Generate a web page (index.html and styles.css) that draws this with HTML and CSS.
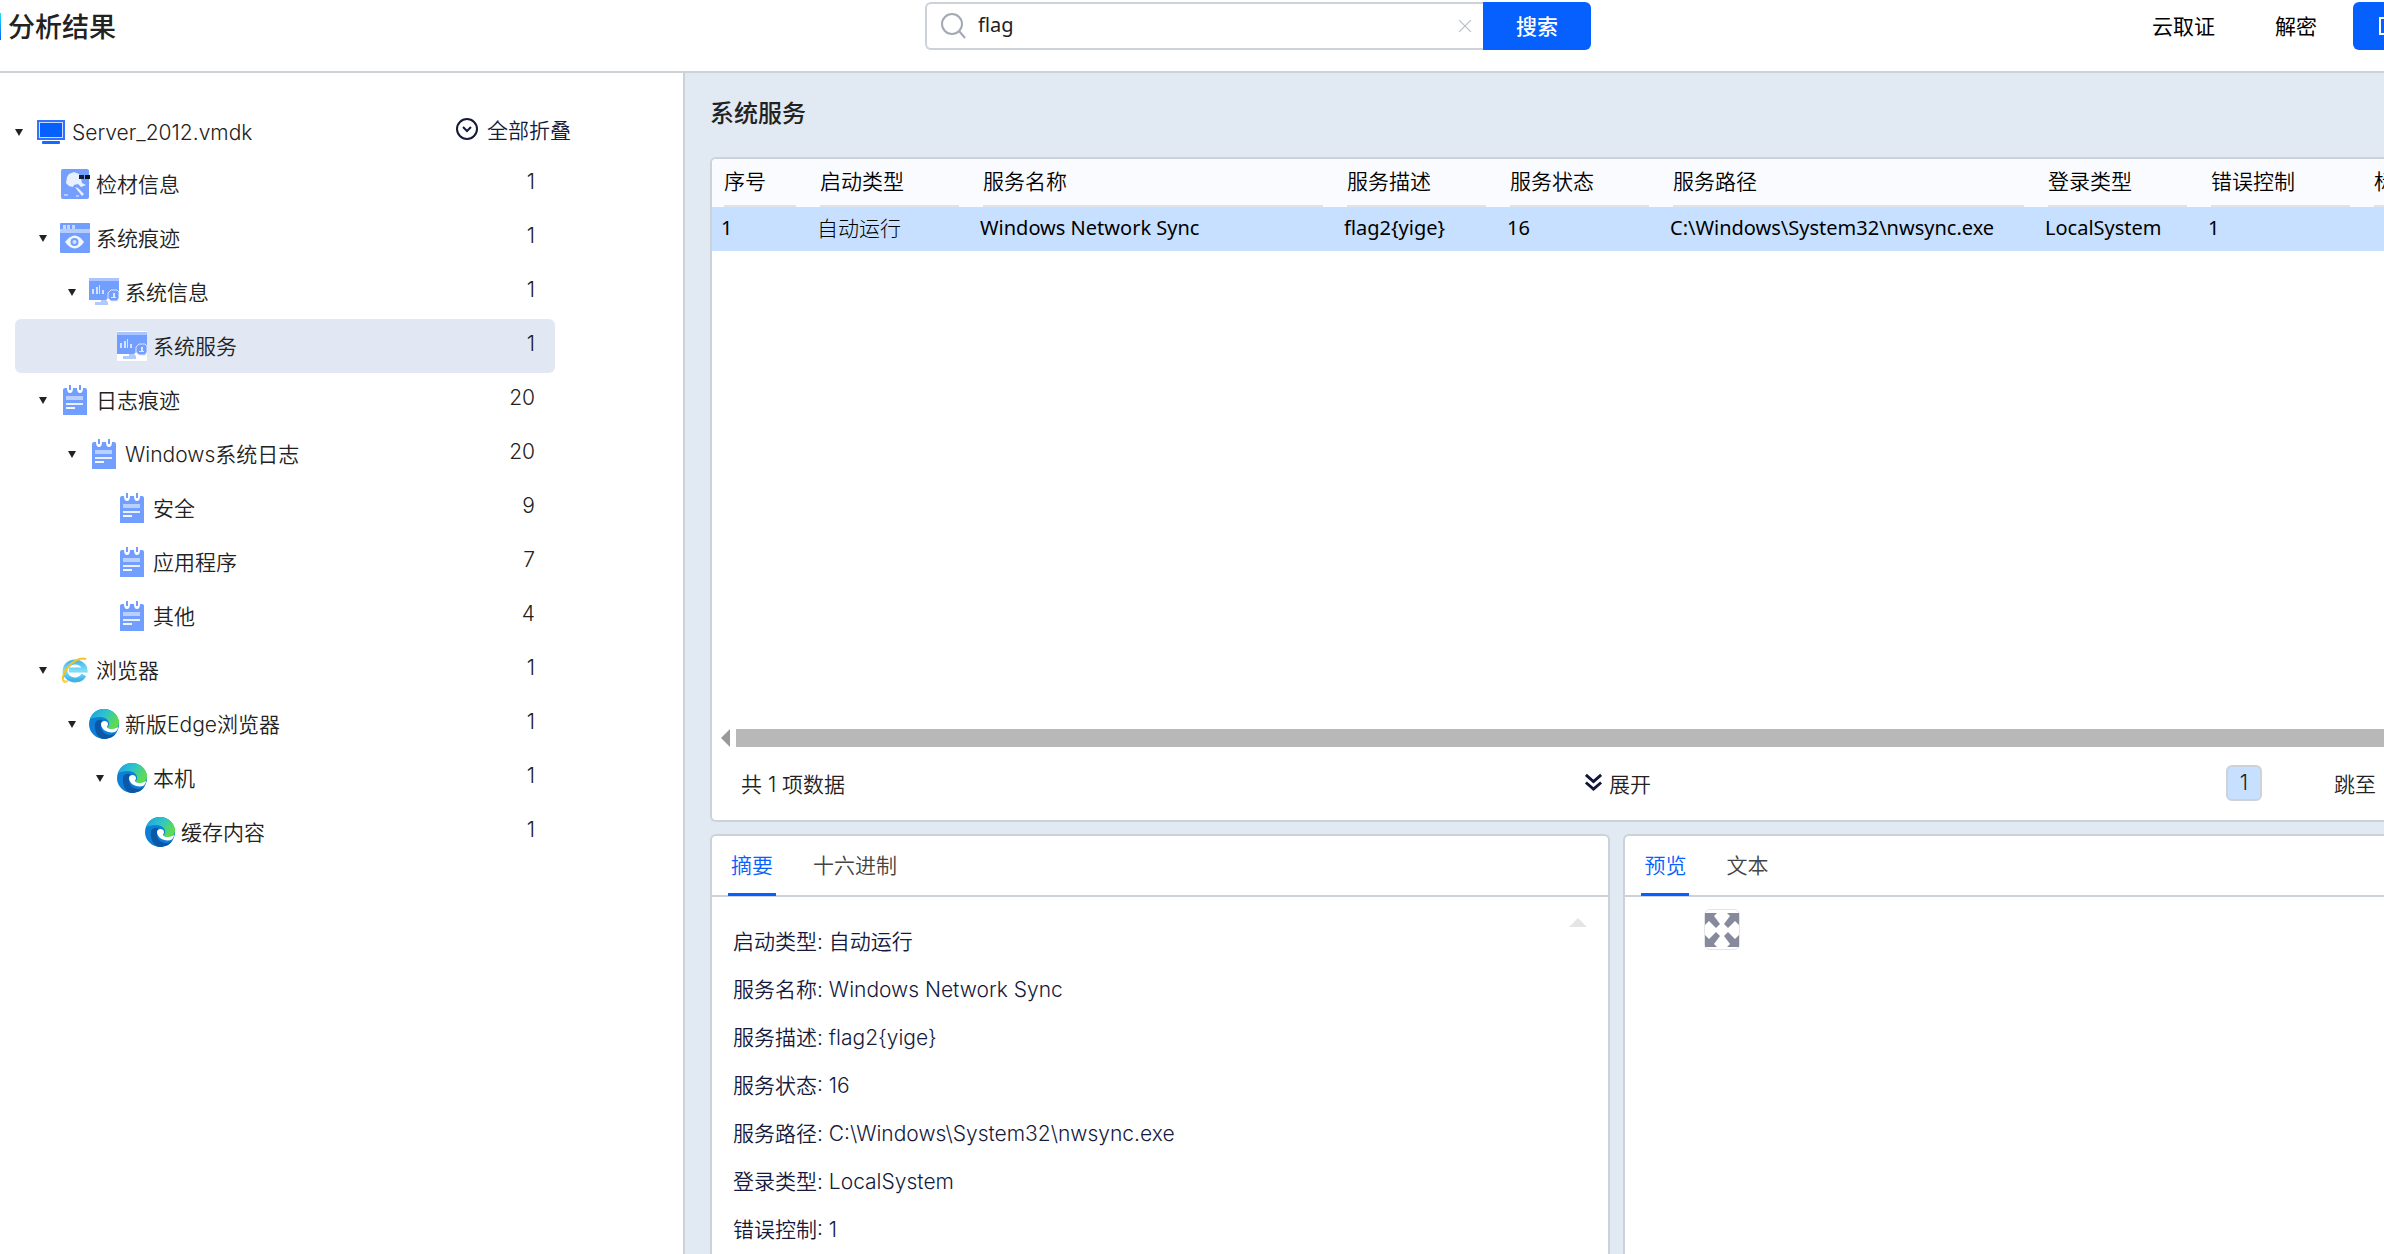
FILE: index.html
```html
<!DOCTYPE html>
<html lang="zh-CN">
<head>
    <meta charset="UTF-8">
    <meta name="viewport" content="width=device-width, initial-scale=1.0">
    <title>分析结果</title>
    <link rel="stylesheet" href="styles.css">
</head>
<body>

    <!-- shared icons -->
    <svg class="icon-defs" aria-hidden="true">
        <defs>
            <linearGradient id="edge-top" x1="0" y1="0" x2="1" y2="0.5">
                <stop offset="0" stop-color="#1b9de0"/>
                <stop offset="0.5" stop-color="#2cc3cf"/>
                <stop offset="1" stop-color="#5fdc4c"/>
            </linearGradient>
            <linearGradient id="ie-ring" x1="0" y1="0" x2="0" y2="1">
                <stop offset="0" stop-color="#4cb8ec"/>
                <stop offset="0.5" stop-color="#7fe0fb"/>
                <stop offset="1" stop-color="#3fb2ea"/>
            </linearGradient>
        </defs>
        <symbol id="icon-screen" viewBox="0 0 30 30">
            <rect x="1" y="3" width="28" height="20" fill="#2f74ff"/>
            <rect x="3" y="5" width="24" height="16" fill="#c9dcff"/>
            <rect x="4" y="6" width="22" height="14" fill="#0560fd"/>
            <rect x="6" y="24" width="18" height="3" rx="1" fill="#1569ff"/>
        </symbol>
        <symbol id="icon-disk" viewBox="0 0 30 30">
            <rect x="1" width="28" height="30" rx="2" fill="#749fff"/>
            <path d="M9 5l5-2 5 2 2 4 1 5 4 2-5 2-3-3-4 1-1 2-4-1-3-3 1-6z" fill="#e9f0ff"/>
            <path d="M15 18l3 1 6 6-2 2-4-5z" fill="#e9f0ff"/>
            <rect x="19" y="6" width="5" height="4" fill="#15223f"/>
            <rect x="25" y="6" width="5" height="4" fill="#101522"/>
            <path d="M4 25h4v2H4zM16 26h3v2h-3z" fill="#b4ccff"/>
        </symbol>
        <symbol id="icon-eye" viewBox="0 0 30 30">
            <rect width="30" height="30" rx="1" fill="#729fff"/>
            <rect y="6" width="30" height="4" fill="#b5ccff"/>
            <path d="M3 2h3v4H3zM7 2h3v4H7zM12 2h3v4h-3z" fill="#c3d6ff"/>
            <path d="M5 19q10-13 19 0q-9 13-19 0z" fill="#f1f6ff"/>
            <circle cx="14.500" cy="19" r="4" fill="#729fff"/>
            <circle cx="14.500" cy="19" r="2" fill="#d3e1ff"/>
        </symbol>
        <symbol id="icon-monitor" viewBox="0 0 30 30">
            <rect y="1" width="30" height="3" fill="#a9c4ff"/>
            <path d="M0 4h30v14h-5l-5 2-3 3H0z" fill="#729fff"/>
            <path d="M3 12h2v5H3zM7 10h2v7H7zM10 8h1v9h-1zM13 13h2v4h-2z" fill="#d6e3ff"/>
            <path d="M12 23h5l2 2v3H6v-3h6z" fill="#b0c9ff"/>
            <path d="M22 13h6l2 2v6l-2 3h-6l-3-3v-5z" fill="#729fff" stroke="#d9e5ff"/>
            <path d="M24 16h2v5h-2zM22 20h5v1h-5z" fill="#dce7ff"/>
        </symbol>
        <symbol id="icon-log" viewBox="0 0 30 30">
            <path d="M3 5q0-2 2-2h2q0 5 3 5t3-5h4q0 5 3 5t3-5h2q2 0 2 2v25H3z" fill="#729fff"/>
            <path d="M9 0h2v5H9zM19 0h2v5h-2z" fill="#729fff"/>
            <rect x="6" y="11" width="17" height="4" fill="#b9d0ff"/>
            <rect x="6" y="18" width="17" height="2" fill="#e8f0ff"/>
            <rect x="6" y="22" width="9" height="2" fill="#f3f7ff"/>
        </symbol>
        <symbol id="icon-ie" viewBox="0 0 30 30">
            <path d="M24 20a10 9 0 1 1 1-5H9" fill="none" stroke="url(#ie-ring)" stroke-width="5"/>
            <path d="M5 27C-3 23 13 0 26 4" fill="none" stroke="#f6c321" stroke-width="2"/>
            <path d="M3 24q0 4 5 2" fill="none" stroke="#f8cf4a" stroke-width="2"/>
        </symbol>
        <symbol id="icon-edge" viewBox="0 0 30 30">
            <circle cx="15" cy="15" r="15" fill="#0f7fd6"/>
            <path d="M1 10C4 2 10 0 15 0c9 0 15 7 15 13 0 6-5 8-9 7-3-1-2-2-1-4 1-4-3-8-9-8-4 0-8 1-10 2z" fill="url(#edge-top)"/>
            <path d="M6 14c2-4 6-4 8-2-3 3-3 10 3 13 4 2 8 1 11-2-3 5-8 7-13 7C9 30 5 23 6 14z" fill="#0c58a8"/>
            <path d="M12 15c0-4 7-4 7 0 0 2-2 3 0 4 2 2 7 1 10-1 0 3-2 4-3 5-4 1-8 0-11-2-2-2-3-4-3-6z" fill="#fff"/>
        </symbol>
    </svg>

    <header class="topbar">
        <div class="brand">
            <span class="brand-mark"></span>
            <h1>分析结果</h1>
        </div>
        <form class="search">
            <label class="search-field">
                <svg class="search-icon" viewBox="0 0 26 26" aria-hidden="true">
                    <circle cx="12" cy="11" r="10"/>
                    <path d="M19 18l6 7"/>
                </svg>
                <input type="text" name="keyword" value="flag" aria-label="搜索">
                <button type="button" class="clear-btn" aria-label="清除">
                    <svg viewBox="0 0 12 12"><path d="M1 1l10 10M11 1L1 11"/></svg>
                </button>
            </label>
            <button type="submit" class="search-btn">搜索</button>
        </form>
        <nav class="top-nav">
            <a href="#">云取证</a>
            <a href="#">解密</a>
            <button type="button" class="export-btn" aria-label="导出">
                <svg viewBox="0 0 18 18"><rect x="1" y="1" width="16" height="16"/></svg>
            </button>
        </nav>
    </header>

    <div class="page">
        <aside class="sidebar">
            <div class="tree-root">
                <div class="tree-row">
                    <span class="arrow"></span>
                    <svg class="tree-icon"><use href="#icon-screen"/></svg>
                    <span class="label">Server_2012.vmdk</span>
                </div>
                <button type="button" class="collapse-btn">
                    <svg viewBox="0 0 22 22"><circle cx="11" cy="11" r="10"/><path d="M7 9l4 4 4-4"/></svg>
                    全部折叠
                </button>
            </div>
            <ul class="tree">
                <li class="tree-row level-1"><span class="arrow leaf"></span><svg class="tree-icon"><use href="#icon-disk"/></svg><span class="label">检材信息</span><span class="count">1</span></li>
                <li class="tree-row level-1"><span class="arrow"></span><svg class="tree-icon"><use href="#icon-eye"/></svg><span class="label">系统痕迹</span><span class="count">1</span></li>
                <li class="tree-row level-2"><span class="arrow"></span><svg class="tree-icon"><use href="#icon-monitor"/></svg><span class="label">系统信息</span><span class="count">1</span></li>
                <li class="tree-row level-3 selected"><span class="arrow leaf"></span><svg class="tree-icon"><use href="#icon-monitor"/></svg><span class="label">系统服务</span><span class="count">1</span></li>
                <li class="tree-row level-1"><span class="arrow"></span><svg class="tree-icon"><use href="#icon-log"/></svg><span class="label">日志痕迹</span><span class="count">20</span></li>
                <li class="tree-row level-2"><span class="arrow"></span><svg class="tree-icon"><use href="#icon-log"/></svg><span class="label">Windows系统日志</span><span class="count">20</span></li>
                <li class="tree-row level-3"><span class="arrow leaf"></span><svg class="tree-icon"><use href="#icon-log"/></svg><span class="label">安全</span><span class="count">9</span></li>
                <li class="tree-row level-3"><span class="arrow leaf"></span><svg class="tree-icon"><use href="#icon-log"/></svg><span class="label">应用程序</span><span class="count">7</span></li>
                <li class="tree-row level-3"><span class="arrow leaf"></span><svg class="tree-icon"><use href="#icon-log"/></svg><span class="label">其他</span><span class="count">4</span></li>
                <li class="tree-row level-1"><span class="arrow"></span><svg class="tree-icon"><use href="#icon-ie"/></svg><span class="label">浏览器</span><span class="count">1</span></li>
                <li class="tree-row level-2"><span class="arrow"></span><svg class="tree-icon"><use href="#icon-edge"/></svg><span class="label">新版Edge浏览器</span><span class="count">1</span></li>
                <li class="tree-row level-3"><span class="arrow"></span><svg class="tree-icon"><use href="#icon-edge"/></svg><span class="label">本机</span><span class="count">1</span></li>
                <li class="tree-row level-4"><span class="arrow leaf"></span><svg class="tree-icon"><use href="#icon-edge"/></svg><span class="label">缓存内容</span><span class="count">1</span></li>
            </ul>
        </aside>

        <main class="content">
            <h2>系统服务</h2>

            <section class="panel result-panel">
                <div class="table-wrap">
                    <table>
                        <colgroup>
                            <col class="col-index">
                            <col class="col-normal">
                            <col class="col-name">
                            <col class="col-normal">
                            <col class="col-normal">
                            <col class="col-path">
                            <col class="col-normal">
                            <col class="col-normal">
                            <col class="col-normal">
                        </colgroup>
                        <thead>
                            <tr>
                                <th>序号</th>
                                <th>启动类型</th>
                                <th>服务名称</th>
                                <th>服务描述</th>
                                <th>服务状态</th>
                                <th>服务路径</th>
                                <th>登录类型</th>
                                <th>错误控制</th>
                                <th>标签</th>
                            </tr>
                        </thead>
                        <tbody>
                            <tr>
                                <td>1</td>
                                <td class="cjk">自动运行</td>
                                <td>Windows Network Sync</td>
                                <td>flag2{yige}</td>
                                <td>16</td>
                                <td>C:\Windows\System32\nwsync.exe</td>
                                <td>LocalSystem</td>
                                <td>1</td>
                                <td></td>
                            </tr>
                        </tbody>
                    </table>
                </div>
                <div class="h-scroll">
                    <span class="scroll-left"></span>
                    <span class="scroll-thumb"></span>
                </div>
                <div class="table-footer">
                    <span class="total">共 1 项数据</span>
                    <button type="button" class="expand-btn">
                        <svg viewBox="0 0 20 20"><path d="M2 2l8 7 8-7M2 10l8 7 8-7"/></svg>
                        展开
                    </button>
                    <div class="pager">
                        <button type="button" class="page-btn">1</button>
                        <span>跳至</span>
                    </div>
                </div>
            </section>

            <div class="bottom">
                <section class="panel summary-panel">
                    <div class="tabs">
                        <button type="button" class="tab active">摘要</button>
                        <button type="button" class="tab">十六进制</button>
                    </div>
                    <div class="summary">
                        <ul>
                            <li>启动类型: 自动运行</li>
                            <li>服务名称: Windows Network Sync</li>
                            <li>服务描述: flag2{yige}</li>
                            <li>服务状态: 16</li>
                            <li>服务路径: C:\Windows\System32\nwsync.exe</li>
                            <li>登录类型: LocalSystem</li>
                            <li>错误控制: 1</li>
                        </ul>
                        <span class="scroll-up"></span>
                    </div>
                </section>
                <section class="panel preview-panel">
                    <div class="tabs">
                        <button type="button" class="tab active">预览</button>
                        <button type="button" class="tab">文本</button>
                    </div>
                    <button type="button" class="full-btn" aria-label="全屏">
                        <svg viewBox="0 0 34 34">
                            <path d="M0 0h12l-3 3 6 8-4 4-7-7-4 4z"/>
                            <path d="M34 0v12l-4-4-7 7-4-4 6-8-3-3z"/>
                            <path d="M0 34V22l4 4 7-7 4 4-6 8 3 3z"/>
                            <path d="M34 34H22l3-3-6-8 4-4 7 7 4-4z"/>
                        </svg>
                    </button>
                </section>
            </div>
        </main>
    </div>

</body>
</html>
```
FILE: styles.css
```css
* {
    box-sizing: border-box;
}
body {
    margin: 0;
    height: 100vh;
    display: flex;
    flex-direction: column;
    overflow: hidden;
    background-color: #fff;
    color: #222;
    font-family: "Inter", "Noto Sans CJK SC", sans-serif;
    font-size: 21px;
    font-weight: 350;
}
h1, h2, ul {
    margin: 0;
    padding: 0;
}
ul {
    list-style: none;
}
button, input {
    font: inherit;
    color: inherit;
    border: none;
    background: none;
    padding: 0;
    margin: 0;
}
button {
    cursor: pointer;
}
a {
    color: #000;
    text-decoration: none;
}
.icon-defs {
    position: absolute;
    width: 0;
    height: 0;
}

/* top bar */
.topbar {
    display: flex;
    flex: none;
    height: 73px;
    padding-top: 2px;
    align-items: flex-start;
    border-bottom: 2px solid #cdd2d7;
}
.brand {
    display: flex;
    align-items: center;
    width: 925px;
    height: 48px;
    gap: 7px;
}
.brand-mark {
    width: 1px;
    height: 27px;
    background: linear-gradient(#19e3f5, #0560fd);
}
.brand h1 {
    padding-bottom: 2px;
    font-size: 27px;
    font-weight: 500;
}
.search {
    display: flex;
    width: 666px;
    height: 48px;
}
.search-field {
    display: flex;
    flex: 1;
    align-items: center;
    padding: 0 11px 0 13px;
    border: 2px solid #cdd2d9;
    border-right: none;
    border-radius: 6px 0 0 6px;
}
.search-icon {
    width: 26px;
    height: 26px;
    fill: none;
    stroke: #a3a9b4;
    stroke-width: 2;
}
.search-field input {
    flex: 1;
    min-width: 0;
    height: 40px;
    padding: 0 12px 4px;
    outline: none;
    font-family: "Noto Sans", sans-serif;
    font-size: 20px;
    font-weight: 400;
}
.clear-btn svg {
    display: block;
    width: 14px;
    height: 14px;
    stroke: #b9bdc5;
    stroke-width: 1;
}
.search-btn {
    width: 108px;
    padding-bottom: 2px;
    background-color: #0560fd;
    border-radius: 0 6px 6px 0;
    color: #fff;
    font-weight: 500;
}
.top-nav {
    display: flex;
    align-items: center;
    margin-left: auto;
    height: 48px;
}
.top-nav a {
    margin-right: 60px;
    padding-bottom: 2px;
    font-weight: 400;
}
.top-nav a + a {
    margin-right: 36px;
}
.export-btn {
    width: 31px;
    height: 48px;
    padding-left: 26px;
    overflow: hidden;
    background-color: #0560fd;
    border-radius: 6px 0 0 6px;
}
.export-btn svg {
    display: block;
    width: 18px;
    height: 18px;
    fill: none;
    stroke: #fff;
    stroke-width: 2;
}

/* page */
.page {
    display: flex;
    flex: 1;
    min-height: 0;
}
.sidebar {
    flex: none;
    width: 685px;
    padding: 30px 112px 0 15px;
    border-right: 2px solid #cdd2d9;
}
.tree-root {
    display: flex;
    justify-content: space-between;
    align-items: center;
}
.tree-root .tree-row {
    padding-top: 4px;
}
.tree {
    padding-right: 16px;
}
.tree-row {
    display: flex;
    align-items: center;
    height: 54px;
    padding-right: 20px;
    border-radius: 6px;
}
.level-1 {
    padding-left: 24px;
}
.level-2 {
    padding-left: 53px;
}
.level-3 {
    padding-left: 81px;
}
.level-4 {
    padding-left: 109px;
}
.selected {
    background-color: #e1e8f4;
}
.selected .tree-icon {
    background-color: #fff;
}
.arrow {
    margin-right: 13px;
    border-top: 7px solid #222;
    border-left: 4px solid transparent;
    border-right: 4px solid transparent;
}
.leaf {
    visibility: hidden;
}
.tree-icon {
    width: 30px;
    height: 30px;
    margin-right: 6px;
}
.tree .label {
    padding-bottom: 2px;
}
.count {
    margin-left: auto;
    padding-bottom: 6px;
}
.collapse-btn {
    display: flex;
    align-items: center;
    gap: 9px;
    padding-bottom: 2px;
    color: #151a3c;
}
.collapse-btn svg {
    width: 22px;
    height: 22px;
    fill: none;
    stroke: #151a3c;
    stroke-width: 2;
}

/* right side */
.content {
    display: flex;
    flex: 1;
    flex-direction: column;
    min-width: 0;
    padding-left: 25px;
    background-color: #e1e9f3;
}
.content h2 {
    height: 84px;
    font-size: 24px;
    font-weight: 500;
    line-height: 82px;
}
.panel {
    overflow: hidden;
    background-color: #fff;
    border: 2px solid #cdd2d9;
    border-radius: 6px;
}
.result-panel {
    display: flex;
    flex: 63;
    flex-direction: column;
    min-height: 0;
    border-right: none;
    border-radius: 6px 0 0 6px;
}
.table-wrap {
    flex: 1;
    min-height: 0;
    overflow: hidden;
}
table {
    width: 1812px;
    table-layout: fixed;
    border-collapse: collapse;
    color: #000;
}
.col-index {
    width: 96px;
}
.col-normal {
    width: 163px;
}
.col-name {
    width: 364px;
}
.col-path {
    width: 375px;
}
th {
    height: 48px;
    padding: 0 12px 6px;
    background: linear-gradient(#e1e1e6, #e1e1e6) no-repeat 12px bottom / calc(100% - 24px) 2px;
    background-color: #fafbff;
    font-weight: 350;
    text-align: left;
    white-space: nowrap;
}
td {
    height: 44px;
    padding: 0 9px 4px;
    background-color: #c7e0ff;
    font-family: "Noto Sans", "Noto Sans CJK SC", sans-serif;
    font-size: 20px;
    font-weight: 400;
    white-space: nowrap;
}
td.cjk {
    font-size: 21px;
    font-weight: 300;
}
.h-scroll {
    display: flex;
    align-items: center;
    gap: 6px;
    height: 18px;
    padding-left: 9px;
}
.scroll-left {
    border-right: 9px solid #999;
    border-top: 9px solid transparent;
    border-bottom: 9px solid transparent;
}
.scroll-thumb {
    flex: 1;
    height: 18px;
    background-color: #b8b8b8;
}
.table-footer {
    display: flex;
    align-items: center;
    height: 73px;
    padding: 0 8px 2px 29px;
}
.total {
    width: 843px;
}
.expand-btn {
    display: flex;
    align-items: center;
    gap: 6px;
}
.expand-btn svg {
    width: 19px;
    height: 19px;
    fill: none;
    stroke: #10153a;
    stroke-width: 3;
}
.pager {
    display: flex;
    align-items: center;
    gap: 72px;
    margin-left: auto;
}
.page-btn {
    width: 36px;
    height: 36px;
    background-color: #c7e0ff;
    border: 2px solid #cdd2d9;
    border-radius: 6px;
}

/* summary and preview */
.bottom {
    display: flex;
    flex: 40;
    gap: 13px;
    min-height: 0;
    margin-top: 12px;
}
.summary-panel {
    flex: 13;
    border-bottom: none;
    border-radius: 6px 6px 0 0;
}
.preview-panel {
    flex: 11;
    border-bottom: none;
    border-right: none;
    border-radius: 6px 0 0 0;
}
.tabs {
    display: flex;
    gap: 34px;
    height: 61px;
    padding-left: 16px;
    border-bottom: 2px solid #cdd2d9;
}
.tab {
    height: 60px;
    padding: 0 3px 2px;
    border-bottom: 3px solid transparent;
    color: #444;
}
.tab.active {
    border-color: #0560fd;
    color: #0560fd;
}
.summary {
    display: flex;
    justify-content: space-between;
    padding: 21px 21px 0;
    color: #151a3c;
}
.summary li {
    line-height: 48px;
}
.scroll-up {
    align-self: flex-start;
    border-bottom: 9px solid #e5e5e5;
    border-left: 9px solid transparent;
    border-right: 9px solid transparent;
}
.full-btn {
    display: block;
    width: 36px;
    height: 41px;
    margin: 12px 0 0 79px;
    border: 1px solid #e3e4e8;
    border-radius: 6px;
}
.full-btn svg {
    display: block;
    width: 34px;
    height: 34px;
    fill: #868a9c;
}
```
